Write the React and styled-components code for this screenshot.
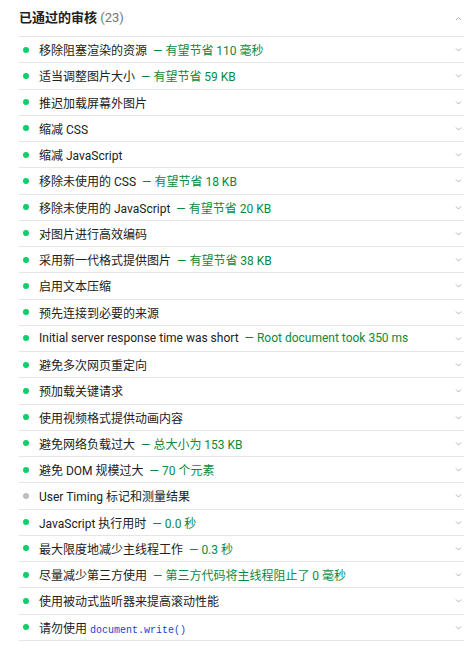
import React from 'react';
import styled, { createGlobalStyle } from 'styled-components';

const GlobalStyle = createGlobalStyle`
    body {
        margin: 0;
        background: #ffffff;
        font-family: Roboto, "Noto Sans CJK SC", "Noto Sans", sans-serif;
        color: #212121;
    }
`;

const Panel = styled.div`
    width: 473px;
    padding: 0 9px 0 19px;
    box-sizing: border-box;
`;

const Header = styled.div`
    height: 37px;
    display: flex;
    align-items: center;
    justify-content: space-between;
    border-bottom: 1px solid #e6e6e6;
    box-sizing: border-box;
`;

const Title = styled.div`
    font-size: 13px;
    font-weight: 700;
    color: #212121;
    padding-bottom: 3px;
`;

const Count = styled.span`
    font-weight: 400;
    color: #757575;
`;

const Row = styled.div`
    height: 26.26px;
    display: flex;
    align-items: center;
    border-bottom: 1px solid #e6e6e6;
    box-sizing: border-box;
    font-size: 12px;
`;

const Dot = styled.span`
    width: 6px;
    height: 6px;
    border-radius: 50%;
    background: ${p => (p.$neutral ? '#bdbdbd' : '#0cce6b')};
    margin: 0 10px 0 4px;
    flex-shrink: 0;
`;

const Label = styled.span`
    flex: 1;
    white-space: nowrap;
    color: #212121;
`;

const Saving = styled.span`
    color: #0a8a3c;
    margin-left: 6px;
`;

const Code = styled.code`
    font-family: "Liberation Mono", "DejaVu Sans Mono", monospace;
    font-size: 10px;
    color: #1a3fd0;
`;

const Chevron = ({ up }) => (
    <svg width="7" height="5" viewBox="0 0 7 5" style={{ marginRight: 2 }}>
        <path
            d={up ? 'M1 4L3.5 1.5L6 4' : 'M1 1.5L3.5 4L6 1.5'}
            fill="none"
            stroke="#b3b3b3"
            strokeWidth="1"
        />
    </svg>
);

const audits = [
    { title: '移除阻塞渲染的资源', saving: '有望节省 110 毫秒' },
    { title: '适当调整图片大小', saving: '有望节省 59 KB' },
    { title: '推迟加载屏幕外图片' },
    { title: '缩减 CSS' },
    { title: '缩减 JavaScript' },
    { title: '移除未使用的 CSS', saving: '有望节省 18 KB' },
    { title: '移除未使用的 JavaScript', saving: '有望节省 20 KB' },
    { title: '对图片进行高效编码' },
    { title: '采用新一代格式提供图片', saving: '有望节省 38 KB' },
    { title: '启用文本压缩' },
    { title: '预先连接到必要的来源' },
    { title: 'Initial server response time was short', saving: 'Root document took 350 ms' },
    { title: '避免多次网页重定向' },
    { title: '预加载关键请求' },
    { title: '使用视频格式提供动画内容' },
    { title: '避免网络负载过大', saving: '总大小为 153 KB' },
    { title: '避免 DOM 规模过大', saving: '70 个元素' },
    { title: 'User Timing 标记和测量结果', neutral: true },
    { title: 'JavaScript 执行用时', saving: '0.0 秒' },
    { title: '最大限度地减少主线程工作', saving: '0.3 秒' },
    { title: '尽量减少第三方使用', saving: '第三方代码将主线程阻止了 0 毫秒' },
    { title: '使用被动式监听器来提高滚动性能' },
    { title: '请勿使用 ', code: 'document.write()' },
];

export default function App() {
    return (
        <>
            <GlobalStyle />
            <Panel>
                <Header>
                    <Title>已通过的审核 <Count>(23)</Count></Title>
                    <Chevron up />
                </Header>
                {audits.map(a => (
                    <Row key={a.title}>
                        <Dot $neutral={a.neutral} />
                        <Label>
                            {a.title}
                            {a.code && <Code>{a.code}</Code>}
                            {a.saving && <Saving>— {a.saving}</Saving>}
                        </Label>
                        <Chevron />
                    </Row>
                ))}
            </Panel>
        </>
    );
}
